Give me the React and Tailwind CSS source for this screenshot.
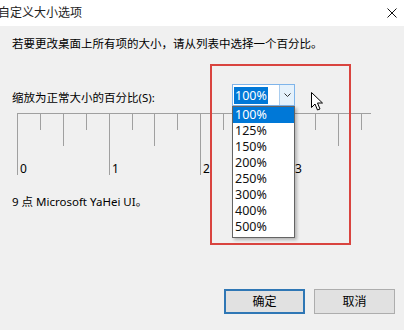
import React from "react";

const ticks = Array.from({ length: 16 }, (_, k) => k);
const items = ["100%", "125%", "150%", "200%", "250%", "300%", "400%", "500%"];

function Ruler() {
  return (
    <svg width="356" height="64" className="block">
      <line x1="0" y1="0.5" x2="354" y2="0.5" stroke="#a0a0a0" />
      {ticks.map((k) => {
        const x = Math.round(22.9 * k) + 0.5;
        const len = k % 4 === 0 ? 62 : k % 2 === 0 ? 33 : 17;
        return <line key={k} x1={x} y1="0" x2={x} y2={len} stroke="#a0a0a0" />;
      })}
      {[0, 1, 2, 3].map((n) => (
        <text
          key={n}
          x={Math.round(22.9 * n * 4) + 3}
          y="60"
          fontSize="12"
          fontFamily="Noto Sans, sans-serif"
          fill="#000"
        >
          {n}
        </text>
      ))}
    </svg>
  );
}

export default function App() {
  return (
    <div className="w-[404px] h-[330px] bg-[#f0f0f0] overflow-hidden relative flex flex-col text-[11.5px] text-black font-['Noto_Sans','Noto_Sans_CJK_SC',sans-serif]">
      {/* title bar */}
      <div className="h-[26px] bg-white flex items-center justify-between pr-[6px] shrink-0">
        <span className="-ml-[2px] text-[12px] text-[#222]">自定义大小选项</span>
        <svg width="10" height="10" viewBox="0 0 10 10" className="mr-[1px]">
          <path d="M0.5 0.5 L9.5 9.5 M9.5 0.5 L0.5 9.5" stroke="#111" strokeWidth="1" />
        </svg>
      </div>

      <div className="px-[12px] pt-[10px]">
        <p className="leading-[16px]">若要更改桌面上所有项的大小，请从列表中选择一个百分比。</p>
        <p className="mt-[38px] leading-[16px]">缩放为正常大小的百分比(S):</p>
        <div className="mt-[7px] ml-[5px]">
          <Ruler />
        </div>
        <p className="mt-[17px] leading-[16px]">9 点 Microsoft YaHei UI。</p>
      </div>

      <div className="mt-auto flex justify-end gap-[9px] pr-[9px] pb-[16px]">
        <button className="w-[81px] h-[25px] bg-[#e1e1e1] border-2 border-[#2f77b5] text-[12px]">
          确定
        </button>
        <button className="w-[81px] h-[25px] bg-[#e1e1e1] border border-[#adadad] text-[12px]">
          取消
        </button>
      </div>

      {/* combo box */}
      <div className="absolute left-[232px] top-[84px] w-[63px] h-[22px] bg-white border border-[#7eb4ea] flex">
        <div className="flex-1 flex items-center pl-[1px]">
          <span className="bg-[#0078d7] text-white leading-[17px] px-[1px] text-[12.5px] font-['Noto_Sans',sans-serif]">
            100%
          </span>
        </div>
        <div className="w-[15px] bg-[#e5f1fb] border-l border-[#a9cdef] flex items-center justify-center">
          <svg width="7" height="4" viewBox="0 0 7 4">
            <path d="M0.5 0.5 L3.5 3.5 L6.5 0.5" stroke="#333" fill="none" strokeWidth="1" />
          </svg>
        </div>
      </div>

      {/* dropdown list */}
      <div className="absolute left-[232px] top-[106px] w-[63px] h-[132px] bg-white border border-[#646464] shadow-[2px_2px_3px_rgba(0,0,0,0.25)] flex flex-col font-['Noto_Sans',sans-serif] text-[12.5px]">
        {items.map((it, i) => (
          <div
            key={it}
            className={
              i === 0
                ? "h-[16px] leading-[16px] pl-[2px] bg-[#0078d7] text-white"
                : "h-[16px] leading-[16px] pl-[2px] text-[#111]"
            }
          >
            {it}
          </div>
        ))}
      </div>

      {/* mouse cursor */}
      <svg width="13" height="20" viewBox="0 0 13 20" className="absolute left-[311px] top-[92px]">
        <path
          d="M0.5 0.5 L0.5 15.5 L4 12 L6.5 18 L9 17 L6.5 11 L11.5 11 Z"
          fill="#fff"
          stroke="#000"
          strokeWidth="1"
          strokeLinejoin="round"
        />
      </svg>

      {/* red highlight */}
      <div className="absolute left-[210px] top-[64px] w-[141px] h-[181px] border-2 border-[#d9443f]"></div>
    </div>
  );
}
